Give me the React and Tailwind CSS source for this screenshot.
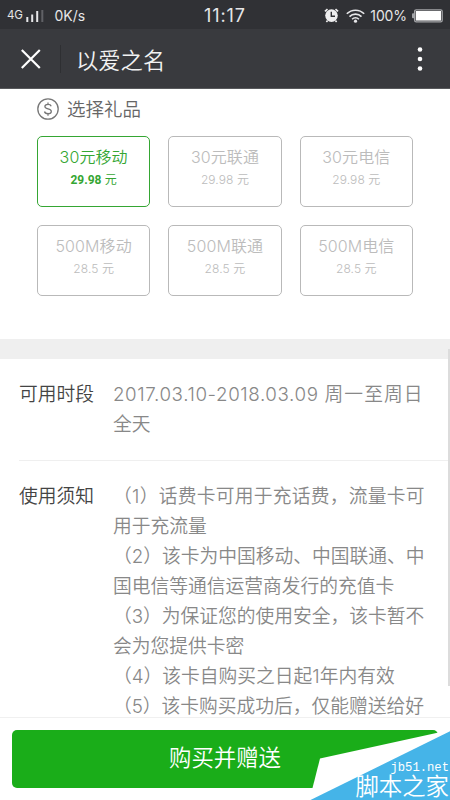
import { useState } from "react";

const gifts = [
  { name: "30元移动", price: "29.98 元" },
  { name: "30元联通", price: "29.98 元" },
  { name: "30元电信", price: "29.98 元" },
  { name: "500M移动", price: "28.5 元" },
  { name: "500M联通", price: "28.5 元" },
  { name: "500M电信", price: "28.5 元" },
];

const notices = [
  "（1）话费卡可用于充话费，流量卡可",
  "用于充流量",
  "（2）该卡为中国移动、中国联通、中",
  "国电信等通信运营商发行的充值卡",
  "（3）为保证您的使用安全，该卡暂不",
  "会为您提供卡密",
  "（4）该卡自购买之日起1年内有效",
  "（5）该卡购买成功后，仅能赠送给好",
];

function StatusBar() {
  return (
    <div className="relative flex h-[29px] shrink-0 items-center bg-[#303135] px-[7px] pt-0.5 text-[#e6e6e8]">
      <span className="text-[11.5px] tracking-tight">4G</span>
      <svg className="ml-1 h-3 w-[18px]" viewBox="0 0 18 12" fill="#e6e6e8">
        <rect x="0.3" y="7" width="2" height="5" />
        <rect x="5.2" y="4.5" width="2" height="7.5" />
        <rect x="10.2" y="1" width="2" height="11" />
        <rect x="15.3" y="0" width="2" height="12" fill="#606166" />
      </svg>
      <span className="ml-[10px] text-sm">0K/s</span>
      <span className="absolute top-[5px] left-[204px] text-[18px] leading-[22px] font-normal tracking-[0.9px]">
        11:17
      </span>
      <svg className="ml-auto h-[15px] w-[15px]" viewBox="0 0 15 15">
        <circle cx="7.5" cy="7.6" r="6.3" fill="#eeeeef" />
        <path d="M3.6 12.5l-1.2 1.5M11.4 12.5l1.2 1.5M0.9 3.4l2.6-2.2M14.1 3.4l-2.6-2.2" stroke="#eeeeef" strokeWidth="1.6" fill="none" />
        <path d="M7.3 3.8v4.5h3.7" stroke="#303135" strokeWidth="1.4" fill="none" />
      </svg>
      <svg className="ml-[7px] h-[14px] w-[19px]" viewBox="0 0 19 14" fill="none" stroke="#e6e6e8" strokeWidth="1.6">
        <path d="M0.8 4.8a12.3 12.3 0 0 1 17.4 0" />
        <path d="M3.5 7.6a8.5 8.5 0 0 1 12 0" />
        <path d="M6.1 10.2a4.8 4.8 0 0 1 6.8 0" />
        <circle cx="9.5" cy="12.2" r="1.6" fill="#e6e6e8" stroke="none" />
      </svg>
      <span className="ml-[5px] text-sm tracking-[-0.1px]">100%</span>
      <svg className="ml-[5px] h-[14px] w-[31px]" viewBox="0 0 31 14">
        <rect x="0" y="4.2" width="2.5" height="5" rx="1" fill="#a4a5a8" />
        <rect x="2.6" y="0.8" width="27.6" height="12" rx="1.6" fill="none" stroke="#a4a5a8" strokeWidth="1.3" />
        <rect x="3.8" y="2" width="25.2" height="9.6" fill="#fff" />
      </svg>
    </div>
  );
}

function TitleBar() {
  return (
    <div className="flex h-[60px] shrink-0 items-center border-b border-[#58595c] bg-[#393a3e] pr-[27px] pl-[21px]">
      <svg className="h-5 w-5" viewBox="0 0 20 20" stroke="#fff" strokeWidth="2.2">
        <path d="M0.8 1l18 18M18.8 1l-18 18" />
      </svg>
      <div className="ml-[19px] h-7 w-px bg-[#2e2f32]" />
      <h1 className="mt-[4px] ml-[15px] text-[22.3px] leading-[30px] font-[350] text-[#f2f2f3]">以爱之名</h1>
      <svg className="ml-auto h-6 w-[6px]" viewBox="0 0 6 24" fill="#fff">
        <circle cx="3" cy="2.5" r="2.3" />
        <circle cx="3" cy="12" r="2.3" />
        <circle cx="3" cy="21.5" r="2.3" />
      </svg>
    </div>
  );
}

function GiftCard({ gift, active, onSelect }) {
  const [amount, unit] = gift.price.split(" ");

  return (
    <button
      type="button"
      onClick={onSelect}
      className={`flex h-[71px] flex-col items-center rounded-[5px] border pt-[8px] ${
        active ? "border-[#35a633] text-[#35a633]" : "border-[#b9b9b9] text-[#bcbcbc]"
      }`}
    >
      <span className="text-base leading-6 font-[350] tracking-[0.1px] whitespace-nowrap">{gift.name}</span>
      {active ? (
        <span className="mt-px text-[12px] leading-5 whitespace-nowrap">
          <b className="font-[Roboto] font-bold">{amount}</b> {unit}
        </span>
      ) : (
        <span className="mt-px text-[12px] leading-5 font-[350] tracking-[0.1px] whitespace-nowrap">{gift.price}</span>
      )}
    </button>
  );
}

function Watermark() {
  return (
    <div className="absolute right-0 bottom-0 h-[70px] w-[140px] text-white">
      <svg className="absolute inset-0 h-[70px] w-[140px]" viewBox="0 0 140 70">
        <path d="M140 0L10 28.5L2 60L0 70H140Z" fill="#fff" />
        <path d="M0.5 70L140 1.3V70Z" fill="#45b4e8" />
      </svg>
      <div className="absolute right-px bottom-px flex flex-col items-end">
        <span className="font-['Liberation_Mono',monospace] text-[12.2px] leading-[14px]">jb51.net</span>
        <span className="text-[23.4px] leading-[24px] font-[350] whitespace-nowrap">脚本之家</span>
      </div>
    </div>
  );
}

function App() {
  const [selected, setSelected] = useState(0);

  return (
    <div className="relative flex h-[800px] w-[450px] flex-col overflow-hidden bg-white font-['Inter','Noto_Sans_CJK_SC',sans-serif]">
      <StatusBar />
      <TitleBar />

      <main className="min-h-0 flex-1 overflow-hidden">
        <section className="h-[250px] pt-[6px] pr-[37px] pl-[37px]">
          <div className="flex items-center gap-2 text-[#666]">
            <svg className="h-[22px] w-[22px]" viewBox="0 0 22 22" fill="none" stroke="#777" strokeWidth="1.3">
              <circle cx="11" cy="11" r="10.2" />
              <path d="M14.2 8.2c-.4-1.2-1.6-1.9-3.2-1.9-1.8 0-3.1.9-3.1 2.2 0 3.2 6.4 1.6 6.4 4.9 0 1.4-1.4 2.3-3.3 2.3s-3.2-.9-3.5-2.2M11 4.5v2M11 15.7v2" />
            </svg>
            <h2 className="text-[18.5px] leading-7 font-[350]">选择礼品</h2>
          </div>
          <div className="mt-[13px] grid grid-cols-3 gap-[18px]">
            {gifts.map((gift, index) => (
              <GiftCard
                key={gift.name}
                gift={gift}
                active={index === selected}
                onSelect={() => setSelected(index)}
              />
            ))}
          </div>
        </section>

        <div className="h-[20px] bg-[#efefef]" />

        <div className="ml-[19px] text-[18.75px] leading-[30px] font-[350] whitespace-nowrap">
          <section className="flex h-[102px] border-b border-[#efefef] pt-[21px]">
            <h3 className="w-[94px] shrink-0 text-[#444]">可用时段</h3>
            <div className="text-[#888]">
              <p>
                <span className="tracking-[0.6px]">2017.03.10-2018.03.09 </span>
                <span className="tracking-[1.1px]">周一至周日</span>
              </p>
              <p>全天</p>
            </div>
          </section>
          <section className="flex pt-[21px]">
            <h3 className="w-[94px] shrink-0 text-[#444]">使用须知</h3>
            <div className="text-[#888]">
              {notices.map((line) => (
                <p key={line} className="first:tracking-[0.25px]">
                  {line}
                </p>
              ))}
            </div>
          </section>
        </div>
      </main>

      <footer className="h-[83px] shrink-0 border-t border-[#f0f0f0] bg-white px-3 pt-3">
        <button
          type="button"
          className="h-[58px] w-full rounded-[5px] bg-[#1aad19] pb-[3px] text-[22.4px] font-[350] text-white"
        >
          购买并赠送
        </button>
      </footer>

      {/* scroll indicator */}
      <div className="absolute top-[349px] right-0 h-[337px] w-[2px] bg-[#dcdcdc]" />
      <Watermark />
    </div>
  );
}

export default App;
